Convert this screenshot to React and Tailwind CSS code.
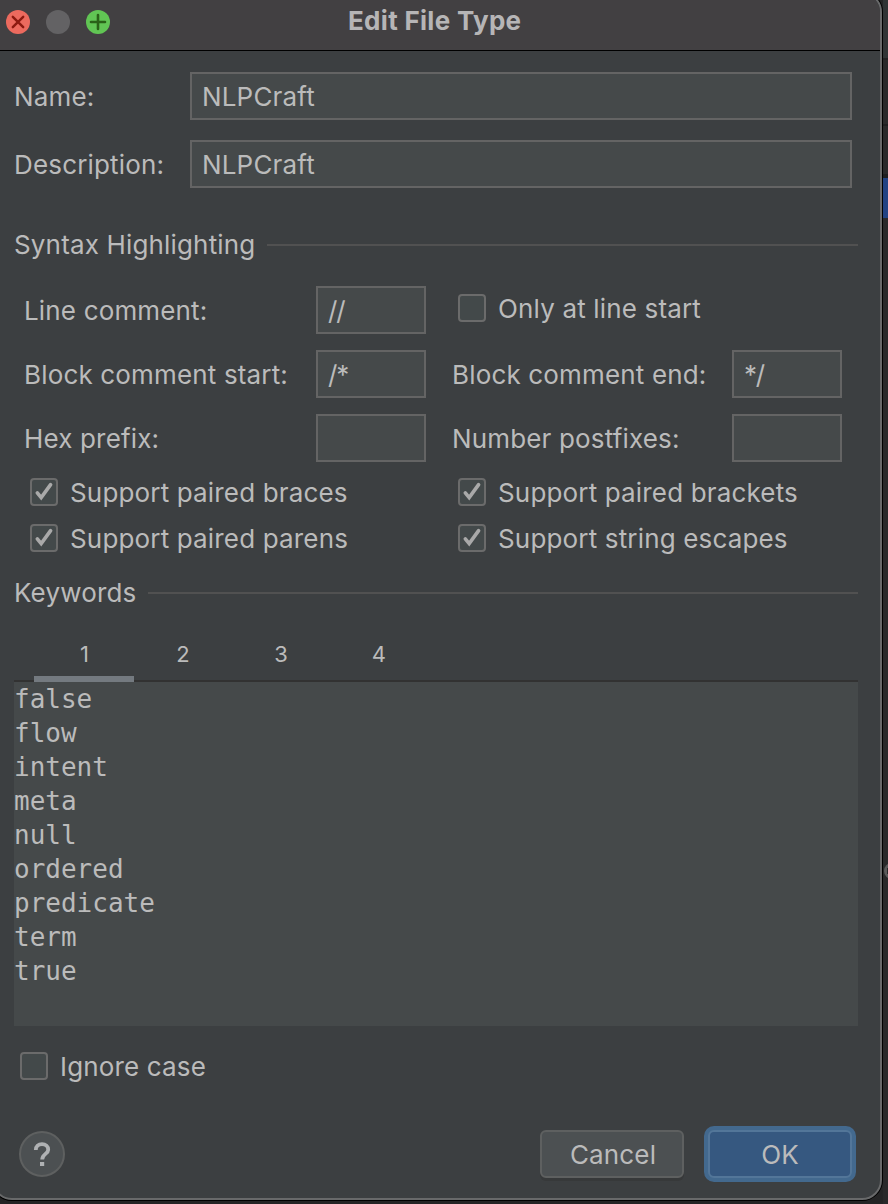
const CheckBox = ({ checked, label, className = "" }) => (
  <div className={`flex h-7 items-center gap-3 ${className}`}>
    <span className="flex size-7 shrink-0 items-center justify-center rounded border-2 border-[#6b6b6b] bg-[#43494a]">
      {checked && (
        <svg viewBox="0 0 24 24" className="size-6" fill="none" stroke="#a9a9a9" strokeWidth="3.6" strokeLinecap="round">
          <path d="M5.3 12.8 L9.2 17.6 L18.6 4.6" />
        </svg>
      )}
    </span>
    <span className="relative top-px whitespace-nowrap">{label}</span>
  </div>
);

const Field = ({ value = "", className = "" }) => (
  <div className={`flex h-12 shrink-0 items-center border-2 border-[#646464] bg-[#45494a] pl-[10px] ${className}`}>
    <span className="relative top-px whitespace-nowrap">{value}</span>
  </div>
);

const Label = ({ children, className = "" }) => (
  <span className={`relative top-px shrink-0 whitespace-nowrap ${className}`}>{children}</span>
);

const Section = ({ title, className = "" }) => (
  <div className={`mr-[22px] ml-[14px] flex h-8 items-center gap-3 ${className}`}>
    <span className="shrink-0 whitespace-nowrap">{title}</span>
    <div className="h-[2px] flex-1 bg-[#515151]" />
  </div>
);

const KEYWORDS = ["false", "flow", "intent", "meta", "null", "ordered", "predicate", "term", "true"];

export default function App() {
  return (
    <div className="relative h-[1204px] w-[888px] overflow-hidden bg-[#242425] font-['Inter',sans-serif] text-[26px] leading-8 font-[440] tracking-[0.16px] text-[#bbbbbb]">
      <div className="absolute top-0 right-0 h-[1204px] w-[5px] bg-[#29292a]">
        <div className="h-[58px] bg-[#303435]" />
        <div className="h-[2px] bg-[#222223]" />
        <div className="h-[64px]" />
        <div className="h-[2px] bg-[#1f1f20]" />
        <div className="h-[48px]" />
        <div className="h-[4px] bg-[#1f1f20]" />
        <div className="h-[40px] bg-[#214283]" />
      </div>
      <div className="absolute top-[863px] left-[884px] size-4 rounded-full bg-[#5b5b5b]" />
      <div className="absolute top-[868px] left-[887px] h-[6px] w-px bg-[#29292a]" />

      <div className="relative -mt-2 -ml-2 flex h-[1208px] w-[890px] flex-col overflow-hidden rounded-[20px] border-2 border-[#68696a] bg-[#3c3f41] pl-[6px] shadow-[0_0_0_1px_#000]">
        <header className="relative -ml-[6px] flex h-[57px] shrink-0 items-center border-b border-black bg-[#424042] pl-3">
          <div className="flex gap-4">
            <svg viewBox="0 0 24 24" className="size-6">
              <circle cx="12" cy="12" r="12" fill="#ec6a5e" />
              <path d="M6.8 6.8 L17.2 17.2 M17.2 6.8 L6.8 17.2" stroke="#8c1a10" strokeWidth="2.4" strokeLinecap="round" />
            </svg>
            <svg viewBox="0 0 24 24" className="size-6">
              <circle cx="12" cy="12" r="12" fill="#636264" />
            </svg>
            <svg viewBox="0 0 24 24" className="size-6">
              <circle cx="12" cy="12" r="12" fill="#61c554" />
              <path d="M12 5 V19 M5 12 H19" stroke="#2a6218" strokeWidth="2.6" strokeLinecap="round" />
            </svg>
          </div>
          <h1 className="relative -top-px ml-[238px] whitespace-nowrap text-[26px] font-bold tracking-[0.3px] text-[#b6b5b6]">Edit File Type</h1>
        </header>

        <div className="mt-[21px] flex items-center pl-[14px]">
          <Label className="w-[176px]">Name:</Label>
          <Field value="NLPCraft" className="w-[662px]" />
        </div>
        <div className="mt-5 flex items-center pl-[14px]">
          <Label className="w-[176px]">Description:</Label>
          <Field value="NLPCraft" className="w-[662px]" />
        </div>

        <Section title="Syntax Highlighting" className="mt-[41px]" />

        <div className="mt-[25px] flex items-center pl-6">
          <Label className="w-[292px]">Line comment:</Label>
          <Field value="//" className="w-[110px] tracking-[-1.2px]" />
          <CheckBox label="Only at line start" className="relative -top-[2px] ml-8" />
        </div>
        <div className="mt-4 flex items-center pl-6">
          <Label className="w-[292px]">Block comment start:</Label>
          <Field value="/*" className="w-[110px] tracking-[-1.2px]" />
          <Label className="ml-[26px] w-[280px]">Block comment end:</Label>
          <Field value="*/" className="w-[110px] tracking-[-1.2px]" />
        </div>
        <div className="mt-4 flex items-center pl-6">
          <Label className="w-[292px]">Hex prefix:</Label>
          <Field className="w-[110px]" />
          <Label className="ml-[26px] w-[280px]">Number postfixes:</Label>
          <Field className="w-[110px]" />
        </div>

        <div className="mt-4 grid grid-cols-[428px_1fr] gap-y-[18px] pl-[30px]">
          <CheckBox checked label="Support paired braces" />
          <CheckBox checked label="Support paired brackets" />
          <CheckBox checked label="Support paired parens" />
          <CheckBox checked label="Support string escapes" />
        </div>

        <Section title="Keywords" className="mt-[25px]" />

        <div className="mr-[22px] ml-[14px] mt-[23px] flex h-[50px] shrink-0 border-b-2 border-[#323232] pl-5 text-[22px]">
          <div className="-mb-[2px] w-[100px] border-b-[6px] border-[#747a80] pt-[6px] pl-px text-center">1</div>
          <div className="w-[98px] pt-[6px] text-center">2</div>
          <div className="w-[98px] pt-[6px] text-center">3</div>
          <div className="w-[98px] pt-[6px] text-center">4</div>
        </div>
        <div className="mr-[22px] ml-[14px] h-[344px] shrink-0 bg-[#45494a] font-['DejaVu_Sans_Mono',monospace] text-[26px] leading-[34px] font-normal tracking-normal">
          {KEYWORDS.map((word) => (
            <div key={word}>{word}</div>
          ))}
        </div>

        <CheckBox label="Ignore case" className="mt-[26px] ml-5 shrink-0" />

        <footer className="mt-[46px] flex h-14 shrink-0 items-center pl-[19px]">
          <div className="flex size-[46px] items-center justify-center rounded-full border-2 border-[#5e6060] bg-[#4c5052]">
            <svg viewBox="0 0 18 26" className="h-[26px] w-[18px]" fill="none" stroke="#afb1b3">
              <path d="M2.8 9 C2.8 5.4 5.4 3.2 9 3.2 C12.6 3.2 15.2 5.4 15.2 8.7 C15.2 12.9 9.2 13 9.2 18.4" strokeWidth="3.8" />
              <path d="M7 22.9 H11.2" strokeWidth="4" />
            </svg>
          </div>
          <button className="ml-[475px] h-12 w-36 rounded-md border-2 border-[#5e6060] bg-[#4c5052] shadow-[0_3px_0_#37393a]">
            <span className="relative top-px left-px">Cancel</span>
          </button>
          <button className="ml-5 h-14 w-[152px] rounded-[10px] border-4 border-[#43698e] bg-[#43698e]">
            <span className="flex h-12 items-center justify-center rounded-md border-2 border-[#537699] bg-[#365880] pt-[2px]">OK</span>
          </button>
        </footer>
      </div>
    </div>
  );
}
